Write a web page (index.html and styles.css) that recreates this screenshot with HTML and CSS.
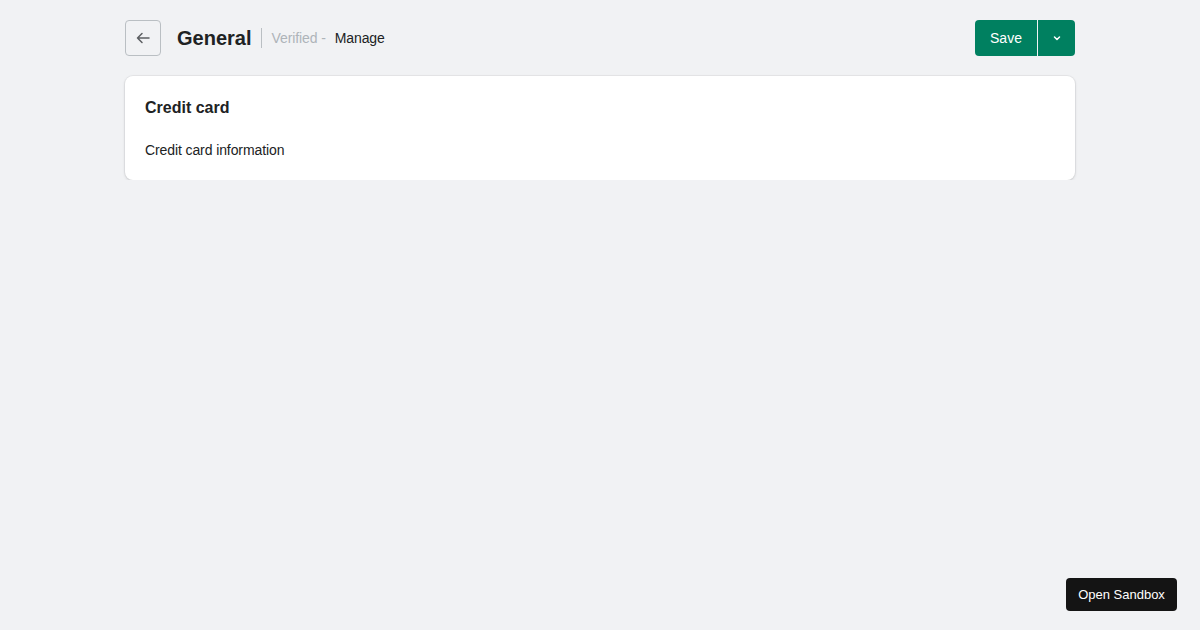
FILE: index.html
```html
<!DOCTYPE html>
<html>
<head>
  <title>General</title>
  <link rel="stylesheet" href="styles.css">
</head>
<body>
  <div class="page">
    <div class="header">
      <button class="back-btn" aria-label="Back">
        <svg width="20" height="20" viewBox="0 0 20 20"><path d="M16 10H4.5M9 5.5L4.5 10 9 14.5" fill="none" stroke="#5c5f62" stroke-width="1.5" stroke-linecap="round" stroke-linejoin="round"/></svg>
      </button>
      <h1 class="title">General</h1>
      <span class="divider"></span>
      <span class="verified">Verified -</span>
      <span class="manage">Manage</span>
      <div class="actions">
        <button class="save-btn">Save</button>
        <button class="more-btn" aria-label="More">
          <svg width="12" height="12" viewBox="0 0 12 12"><path d="M3.5 5l2.5 2.5L8.5 5" fill="none" stroke="#fff" stroke-width="1.5" stroke-linecap="round" stroke-linejoin="round"/></svg>
        </button>
      </div>
    </div>

    <div class="card">
      <h2 class="card-title">Credit card</h2>
      <p class="card-text">Credit card information</p>
    </div>
  </div>

  <button class="sandbox-btn">Open Sandbox</button>
</body>
</html>
```

FILE: styles.css
```css
body {
  margin: 0;
  background: #f1f2f4;
  font-family: "Liberation Sans", Arial, sans-serif;
  color: #202223;
}

/* contenido principal */
.page {
  width: 950px;
  margin: 0 auto;
  padding-top: 20px;
}

.header {
  display: flex;
  align-items: center;
  height: 36px;
}

.back-btn {
  width: 36px;
  height: 36px;
  padding: 0;
  border: 1px solid #babfc3;
  border-radius: 4px;
  background: #f1f2f4;
  display: flex;
  align-items: center;
  justify-content: center;
  cursor: pointer;
}

.title {
  margin: 0 0 0 16px;
  font-size: 20px;
  line-height: 28px;
  font-weight: 700;
  color: #202223;
}

.divider {
  width: 1px;
  height: 20px;
  background: #babfc3;
  margin: 0 9px 0 10px;
}

.verified {
  font-size: 14px;
  letter-spacing: -0.1px;
  color: #aeb4b9;
}

.manage {
  font-size: 14px;
  letter-spacing: -0.1px;
  color: #202223;
  margin-left: 9px;
}

.actions {
  margin-left: auto;
  display: flex;
  height: 36px;
}

.save-btn,
.more-btn {
  background: #008060;
  color: #fff;
  border: 0;
  height: 36px;
  font-family: inherit;
  font-size: 14px;
  cursor: pointer;
}

.save-btn {
  width: 63px;
  border-radius: 4px 0 0 4px;
  border-right: 1px solid #f1f2f4;
}

.more-btn {
  width: 37px;
  border-radius: 0 4px 4px 0;
  display: flex;
  align-items: center;
  justify-content: center;
}

.card {
  margin-top: 20px;
  background: #fff;
  border-radius: 8px;
  padding: 21px 20px 20px;
  box-shadow: 0 0 0 1px rgba(63, 63, 68, 0.05), 0 1px 3px rgba(63, 63, 68, 0.18);
}

.card-title {
  margin: 0;
  font-size: 16px;
  line-height: 22px;
  font-weight: 700;
}

.card-text {
  margin: 21px 0 0;
  font-size: 14px;
  line-height: 20px;
  letter-spacing: -0.1px;
}

.sandbox-btn {
  position: fixed;
  right: 23px;
  bottom: 19px;
  width: 111px;
  height: 33px;
  background: #141414;
  color: #fff;
  border: 0;
  border-radius: 4px;
  font-family: inherit;
  font-size: 13px;
  cursor: pointer;
}
```
